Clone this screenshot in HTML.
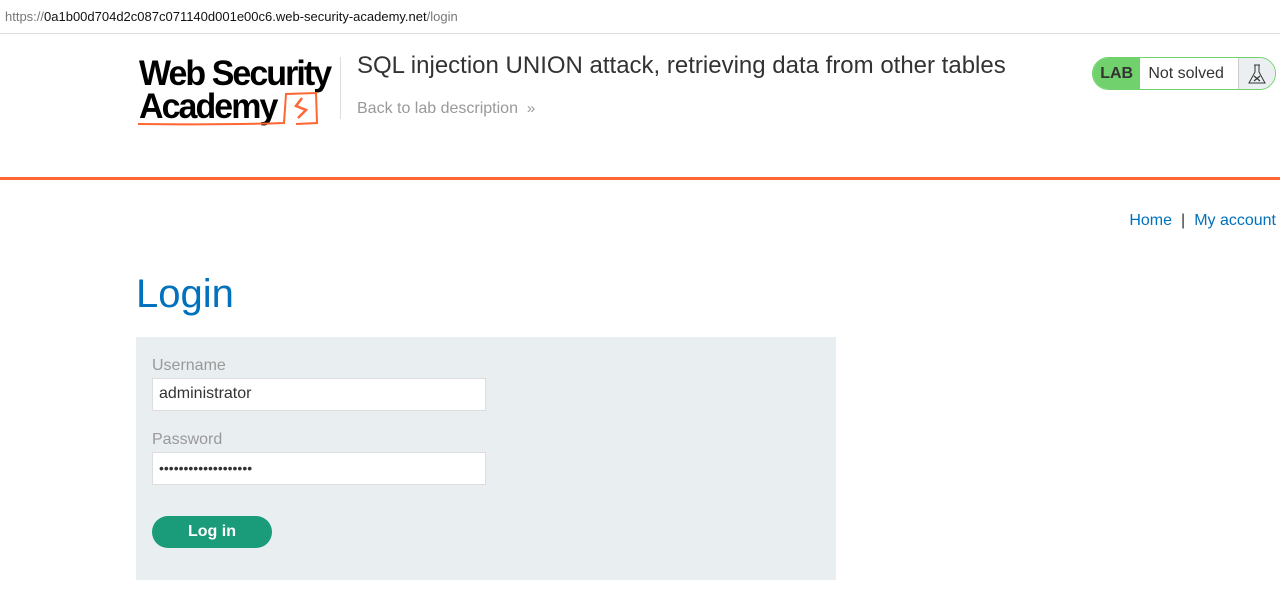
<!DOCTYPE html>
<html><head><meta charset="utf-8"><style>
*{box-sizing:border-box;margin:0;padding:0}
body{width:1280px;height:593px;overflow:hidden;background:#fff;font-family:"Liberation Sans",Arial,sans-serif;position:relative}
.url{position:absolute;left:0;top:0;width:1280px;height:34px;border-bottom:1px solid #ddd;background:#fff;font-size:13px;color:#111;padding:9px 0 0 5px}
.url .g{color:#777}
.hdr{position:absolute;left:0;top:35px;width:1280px;height:145px;border-bottom:3px solid #ff6633}
.logo{position:absolute;left:139px;top:22px;font-size:35px;line-height:33px;letter-spacing:-2px;color:#000;font-weight:bold;transform:scaleX(0.97);transform-origin:left}
.sep{position:absolute;left:340px;top:22px;width:1px;height:62px;background:#ddd}
.title{position:absolute;left:357px;top:17px;font-size:24px;color:#333}
.back{position:absolute;left:357px;top:65px;font-size:16px;color:#999}
.badge{position:absolute;left:1092px;top:22px;width:184px;height:33px;border:1px solid #70d16d;border-radius:17px;overflow:hidden;display:flex}
.badge .l{background:#70d16d;width:48px;font-weight:bold;font-size:16px;color:#333;text-align:center;line-height:31px}
.badge .m{width:99px;font-size:16px;color:#333;padding-left:8px;line-height:31px}
.badge .r{flex:1;background:#eceff1;border-left:1px solid #ccc}
.nav{position:absolute;right:4px;top:212px;font-size:16px;color:#0071bc}
.nav span{color:#333;margin:0 9px}
h1{position:absolute;left:136px;top:272px;font-size:40px;font-weight:normal;color:#0071bc}
.form{position:absolute;left:136px;top:337px;width:700px;height:243px;background:#e9eef1}
.lab{position:absolute;left:16px;font-size:16px;color:#999}
.inp{position:absolute;left:16px;width:334px;height:33px;background:#fff;border:1px solid #ddd;font-size:16px;color:#333;padding:6px 6px}
.btn{position:absolute;left:16px;top:179px;width:120px;height:32px;background:#1a9c7b;border-radius:16px;color:#fff;font-weight:bold;font-size:16px;text-align:center;line-height:32px}
</style></head><body>
<div class="url"><span class="g">https://</span>0a1b00d704d2c087c071140d001e00c6.web-security-academy.net<span class="g">/login</span></div>
<div class="hdr">
<div class="logo">Web Security<br>Academy</div>
<svg style="position:absolute;left:136px;top:55px" width="185" height="38"><path d="M2 34 Q90 35 148 33 L150 4 L180 3 L181 33 L160 34" fill="none" stroke="#ff6633" stroke-width="2"/><path d="M166 8 L160 16 L170 20 L162 28" fill="none" stroke="#ff6633" stroke-width="2.5"/></svg>
<div class="sep"></div>
<div class="title">SQL injection UNION attack, retrieving data from other tables</div>
<div class="back">Back to lab description &nbsp;<span style="font-size:15px">»</span></div>
<div class="badge"><div class="l">LAB</div><div class="m">Not solved</div><div class="r"><svg width="36" height="31"><path d="M15 7 L21 7 M16 7 L16 14 L10 25 L26 25 L20 14 L20 7" fill="none" stroke="#333" stroke-width="1"/><path d="M15 18 L21 23 M21 18 L15 23" stroke="#333" stroke-width="1.2"/></svg></div></div>
</div>
<div class="nav">Home<span>|</span>My account</div>
<h1>Login</h1>
<div class="form">
<div class="lab" style="top:20px">Username</div>
<div class="inp" style="top:41px">administrator</div>
<div class="lab" style="top:94px">Password</div>
<div class="inp" style="top:115px;font-size:14px;padding-top:7px">•••••••••••••••••••</div>
<div class="btn">Log in</div>
</div>
</body></html>
